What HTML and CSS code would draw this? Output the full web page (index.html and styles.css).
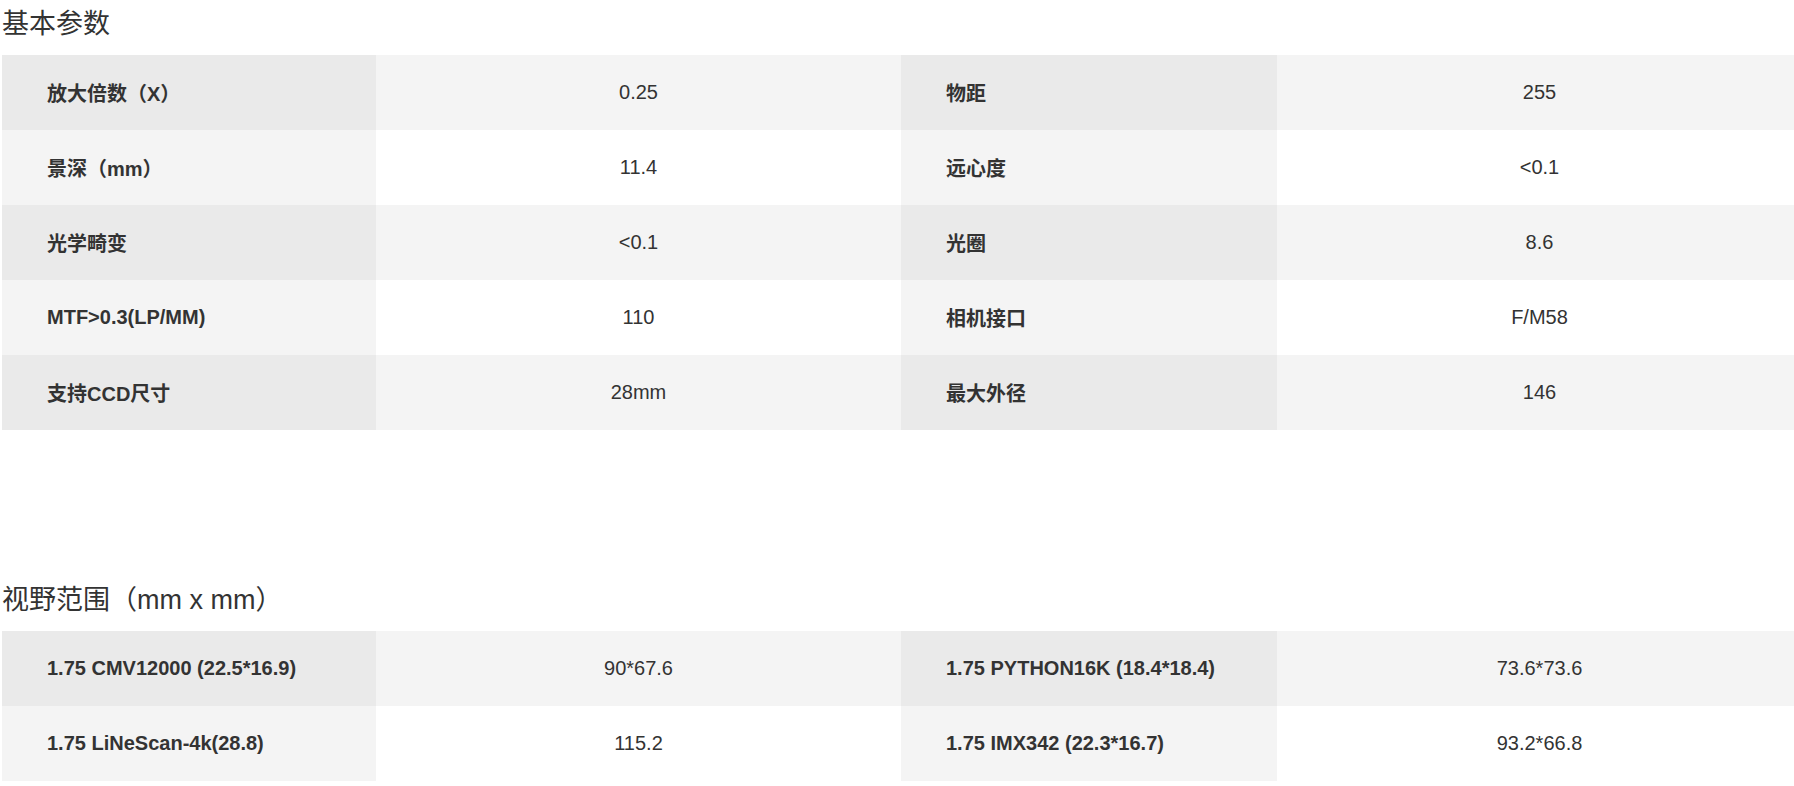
FILE: index.html
```html
<!DOCTYPE html>
<html lang="zh-CN">
<head>
<meta charset="utf-8">
<title>基本参数</title>
<link rel="stylesheet" href="styles.css">
</head>
<body>
<div class="page">
  <section class="block">
    <h2 class="block-title">基本参数</h2>
    <table class="spec">
      <colgroup><col class="c-label"><col class="c-value"><col class="c-label2"><col class="c-value"></colgroup>
      <tbody>
        <tr><th>放大倍数（X）</th><td>0.25</td><th>物距</th><td>255</td></tr>
        <tr><th>景深（mm）</th><td>11.4</td><th>远心度</th><td>&lt;0.1</td></tr>
        <tr><th>光学畸变</th><td>&lt;0.1</td><th>光圈</th><td>8.6</td></tr>
        <tr><th>MTF&gt;0.3(LP/MM)</th><td>110</td><th>相机接口</th><td>F/M58</td></tr>
        <tr><th>支持CCD尺寸</th><td>28mm</td><th>最大外径</th><td>146</td></tr>
      </tbody>
    </table>
  </section>
  <section class="block block-second">
    <h2 class="block-title">视野范围（mm x mm）</h2>
    <table class="spec">
      <colgroup><col class="c-label"><col class="c-value"><col class="c-label2"><col class="c-value"></colgroup>
      <tbody>
        <tr><th>1.75 CMV12000 (22.5*16.9)</th><td>90*67.6</td><th>1.75 PYTHON16K (18.4*18.4)</th><td>73.6*73.6</td></tr>
        <tr><th>1.75 LiNeScan-4k(28.8)</th><td>115.2</td><th>1.75 IMX342 (22.3*16.7)</th><td>93.2*66.8</td></tr>
      </tbody>
    </table>
  </section>
</div>
</body>
</html>
```

FILE: styles.css
```css
html, body {
  margin: 0;
  padding: 0;
  background: #fff;
  overflow: hidden;
}

body {
  font-family: "Liberation Sans", Arial, "Noto Sans CJK SC", sans-serif;
  color: #333;
}

.page {
  padding-left: 2px;
  width: 1800px;
}

.block-second {
  margin-top: 146px;
}

.block-title {
  margin: 0 0 7px;
  font-size: 27px;
  font-weight: normal;
  line-height: 48px;
  color: #333;
}

.spec {
  width: 1800px;
  border-collapse: collapse;
  table-layout: fixed;
}

.c-label { width: 374px; }
.c-label2 { width: 376px; }
.c-value { width: 525px; }

.spec th,
.spec td {
  height: 75px;
  padding: 0;
  font-size: 20px;
  vertical-align: middle;
  color: #333;
}

.spec th {
  padding-left: 45px;
  text-align: left;
  font-weight: bold;
  white-space: nowrap;
}

.spec td {
  text-align: center;
  font-weight: normal;
}

.spec tr:nth-child(odd) th { background: #eaeaea; }
.spec tr:nth-child(odd) td { background: #f4f4f4; }
.spec tr:nth-child(even) th { background: #f4f4f4; }
.spec tr:nth-child(even) td { background: #fff; }
```
